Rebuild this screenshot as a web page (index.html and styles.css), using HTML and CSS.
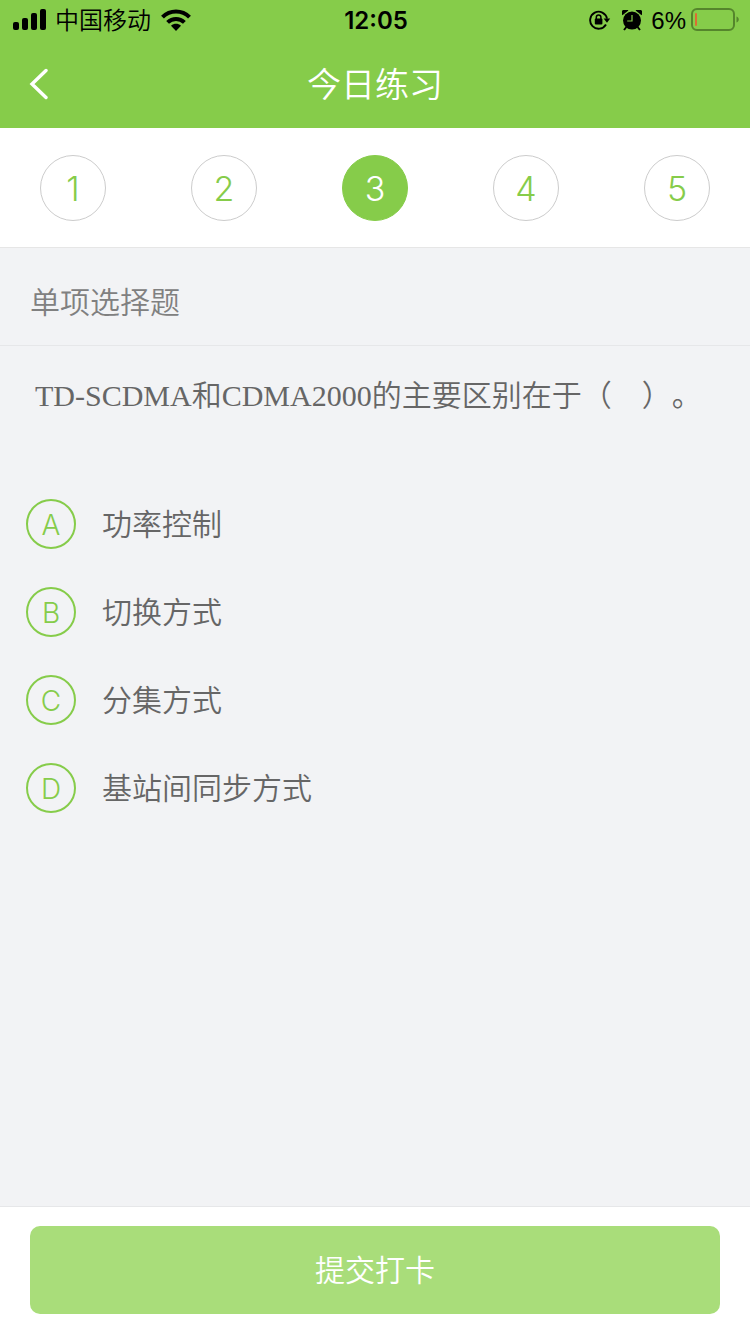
FILE: index.html
```
<!DOCTYPE html>
<html lang="zh-CN">
<head>
<meta charset="UTF-8">
<meta name="viewport" content="width=device-width, initial-scale=1.0">
<title>今日练习</title>
<link rel="stylesheet" href="styles.css">
</head>
<body>
<header class="header">
    <div class="status">
        <div class="status-left">
            <svg class="signal" width="34" height="22" viewBox="0 0 34 22">
                <rect x="0" y="13" width="6" height="8" rx="2"/>
                <rect x="9" y="9" width="6" height="12" rx="2"/>
                <rect x="18" y="4" width="6" height="17" rx="2"/>
                <rect x="27" y="0" width="6" height="21" rx="2"/>
            </svg>
            <span class="carrier">中国移动</span>
            <svg class="wifi" width="30" height="22" viewBox="0 0 30 22">
                <g fill="none" stroke="#000" stroke-width="4">
                    <path d="M1.5 8.2C9 .6 21 .6 28.5 8.2"/>
                    <path d="M6.6 13.4c4.8-4.7 12-4.7 16.8 0"/>
                </g>
                <path d="M10 16.7c3-2.5 7-2.5 10 0L15 22z"/>
            </svg>
        </div>
        <span class="time">12:05</span>
        <div class="status-right">
            <svg class="lock" width="22" height="20" viewBox="0 0 22 20">
                <path d="M17 14.5A8.5 8.5 0 1 1 18 8.6" fill="none" stroke="#000" stroke-width="1.9"/>
                <path d="M14.6 8.4h6.6L18 12.8z"/>
                <rect x="5.8" y="8.6" width="7.6" height="6" rx="1"/>
                <path d="M7.3 9V7.3a2.3 2.3 0 0 1 4.6 0V9" fill="none" stroke="#000" stroke-width="1.5"/>
            </svg>
            <svg class="alarm" width="20" height="21" viewBox="0 0 20 21">
                <circle cx="10" cy="10.6" r="9"/>
                <path d="M.4 5.2A3.4 3.4 0 0 1 6.4.6zM19.6 5.2A3.4 3.4 0 0 0 13.6.6z"/>
                <path d="M4.4 17L2 20M15.6 17L18 20" stroke="#000" stroke-width="2"/>
                <path d="M10 5v6H5.2" fill="none" stroke="#86cc4a" stroke-width="1.2"/>
            </svg>
            <span class="percent">6%</span>
            <svg class="battery" width="48" height="24" viewBox="0 0 48 24">
                <rect x="1" y="1" width="42" height="21" rx="5" fill="none" stroke="#55852c" stroke-width="2"/>
                <rect x="4" y="5" width="2" height="13" rx="1" fill="#dc6c33"/>
                <path d="M45.5 8.5c3 1 3 5 0 6z" fill="#55852c"/>
            </svg>
        </div>
    </div>
    <div class="nav">
        <button class="back" type="button" aria-label="返回">
            <svg width="20" height="32" viewBox="0 0 20 32">
                <path d="M18 2.5L4 16l14 13.5" fill="none" stroke="#fff" stroke-width="3.4" stroke-linecap="round"/>
            </svg>
        </button>
        <h1 class="title">今日练习</h1>
    </div>
</header>

<nav class="steps">
    <button class="step" type="button">1</button>
    <button class="step" type="button">2</button>
    <button class="step active" type="button">3</button>
    <button class="step" type="button">4</button>
    <button class="step" type="button">5</button>
</nav>

<main class="main">
    <h2 class="type">单项选择题</h2>
    <p class="question" id="question">TD-SCDMA和CDMA2000的主要区别在于（　）。</p>
    <div class="options" role="radiogroup" aria-labelledby="question">
        <label class="option">
            <input type="radio" name="answer" value="A">
            <span class="letter">A</span>
            <span class="text">功率控制</span>
        </label>
        <label class="option">
            <input type="radio" name="answer" value="B">
            <span class="letter">B</span>
            <span class="text">切换方式</span>
        </label>
        <label class="option">
            <input type="radio" name="answer" value="C">
            <span class="letter">C</span>
            <span class="text">分集方式</span>
        </label>
        <label class="option">
            <input type="radio" name="answer" value="D">
            <span class="letter">D</span>
            <span class="text">基站间同步方式</span>
        </label>
    </div>
</main>

<footer class="footer">
    <button class="submit" type="button">提交打卡</button>
</footer>
</body>
</html>
```
FILE: styles.css
```
* {
    box-sizing: border-box;
}

body {
    margin: 0;
    min-height: 100vh;
    display: flex;
    flex-direction: column;
    background-color: #f2f3f5;
    color: #666;
    font-family: "Noto Sans CJK SC", sans-serif;
    font-size: 30px;
    font-weight: 350;
    text-spacing-trim: space-all;
}

button {
    font-family: inherit;
    font-weight: inherit;
    cursor: pointer;
}

.header {
    background-color: #86cc4a;
}

/* Status bar */
.status {
    height: 40px;
    padding: 0 11px 0 13px;
    display: grid;
    grid-template-columns: 1fr auto 1fr;
    align-items: center;
    color: #000;
    font-family: Inter, "Noto Sans CJK SC", sans-serif;
    font-size: 24px;
    line-height: 38px;
}

.status span {
    padding-top: 2px;
}

.status-left,
.status-right {
    display: flex;
    align-items: center;
}

.status-right {
    justify-content: flex-end;
}

.carrier {
    margin: 0 10px 0 8px;
}

.time {
    font-weight: 600;
}

.alarm {
    margin: 0 9px 0 11px;
}

.percent {
    font-family: "Liberation Sans", sans-serif;
    font-weight: 400;
    margin-right: 5px;
}

/* Title bar */
.nav {
    height: 88px;
    padding: 0 20px;
    display: grid;
    grid-template-columns: 60px 1fr 60px;
    align-items: center;
}

.back {
    display: flex;
    padding: 8px;
    border: none;
    background: none;
}

.title {
    margin: 0;
    padding-bottom: 2px;
    color: #fff;
    font-size: 34px;
    font-weight: 350;
    line-height: 48px;
    text-align: center;
}

/* Question numbers */
.steps {
    display: flex;
    justify-content: space-between;
    padding: 27px 40px 26px;
    background-color: #fff;
    border-bottom: 1px solid #e6e6e6;
}

.step {
    width: 66px;
    height: 66px;
    padding: 0;
    border: 1px solid #ccc;
    border-radius: 50%;
    background-color: #fff;
    color: #86cc4a;
    font-family: Inter, sans-serif;
    font-size: 34px;
    font-weight: 350;
}

.step.active {
    border-color: #86cc4a;
    background-color: #86cc4a;
    color: #fff;
}

/* Question */
.main {
    flex: 1;
}

.type {
    margin: 0;
    padding: 28px 30px 21px;
    border-bottom: 1px solid #e6e7e9;
    color: #808080;
    font-size: 30px;
    font-weight: 350;
    line-height: 48px;
}

.question {
    margin: 0;
    padding: 26px 35px 60px;
    font-family: "Liberation Serif", "Noto Sans CJK SC", serif;
    line-height: 48px;
}

.option {
    display: flex;
    align-items: center;
    gap: 26px;
    height: 88px;
    padding: 0 26px;
    line-height: 48px;
    cursor: pointer;
}

.option input {
    position: absolute;
    opacity: 0;
}

.letter {
    width: 50px;
    height: 50px;
    border: 2px solid #86cc4a;
    border-radius: 50%;
    color: #86cc4a;
    font-family: Inter, sans-serif;
    font-size: 28px;
    font-weight: 350;
    text-align: center;
}

.option input:checked + .letter {
    background-color: #86cc4a;
    color: #fff;
}

.text {
    padding-bottom: 4px;
}

/* Submit */
.footer {
    padding: 19px 30px 20px;
    background-color: #fff;
    border-top: 1px solid #e6e7e9;
}

.submit {
    width: 100%;
    height: 88px;
    padding: 0 0 4px;
    border: none;
    border-radius: 10px;
    background-color: #a9dd7a;
    color: #fff;
    font-size: 30px;
}
```
